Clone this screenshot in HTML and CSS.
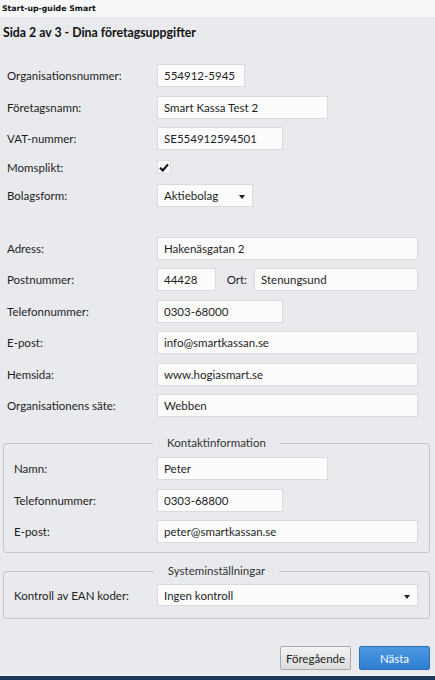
FILE: index.html
```html
<!DOCTYPE html>
<html lang="sv">
<head>
<meta charset="utf-8">
<title>Start-up-guide Smart</title>
<link rel="stylesheet" href="styles.css">
</head>
<body>
<div class="window">
  <div class="titlebar">Start-up-guide Smart</div>
  <div class="content">
    <h1 class="heading">Sida 2 av 3 - Dina företagsuppgifter</h1>

    <div class="group first">
      <div class="row"><span class="label">Organisationsnummer:</span><span class="input w88">554912-5945</span></div>
      <div class="row"><span class="label">Företagsnamn:</span><span class="input w171">Smart Kassa Test 2</span></div>
      <div class="row"><span class="label">VAT-nummer:</span><span class="input w126">SE554912594501</span></div>
      <div class="row check-row"><span class="label">Momsplikt:</span><span class="checkbox"><svg width="10" height="9" viewBox="0 0 10 9"><path d="M1 4.8 L3.8 7.4 L9 1.4" fill="none" stroke="#111" stroke-width="2.2"/></svg></span></div>
      <div class="row"><span class="label">Bolagsform:</span><span class="input select w96">Aktiebolag<span class="arrow"></span></span></div>
    </div>

    <div class="group second">
      <div class="row"><span class="label">Adress:</span><span class="input wfull">Hakenäsgatan 2</span></div>
      <div class="row"><span class="label">Postnummer:</span><span class="input w59">44428</span><span class="ort-label">Ort:</span><span class="input wort">Stenungsund</span></div>
      <div class="row"><span class="label">Telefonnummer:</span><span class="input w126">0303-68000</span></div>
      <div class="row"><span class="label">E-post:</span><span class="input wfull">info@smartkassan.se</span></div>
      <div class="row"><span class="label">Hemsida:</span><span class="input wfull">www.hogiasmart.se</span></div>
      <div class="row"><span class="label">Organisationens säte:</span><span class="input wfull">Webben</span></div>
    </div>

    <fieldset class="box contact">
      <legend>Kontaktinformation</legend>
      <div class="row"><span class="label inner">Namn:</span><span class="input w171">Peter</span></div>
      <div class="row"><span class="label inner">Telefonnummer:</span><span class="input w126">0303-68800</span></div>
      <div class="row"><span class="label inner">E-post:</span><span class="input wfull">peter@smartkassan.se</span></div>
    </fieldset>

    <fieldset class="box system">
      <legend>Systeminställningar</legend>
      <div class="row sel-row"><span class="label inner">Kontroll av EAN koder:</span><span class="input select wfull">Ingen kontroll<span class="arrow"></span></span></div>
    </fieldset>

    <div class="buttons">
      <button class="btn prev">Föregående</button>
      <button class="btn next">Nästa</button>
    </div>
  </div>
  <div class="taskbar"></div>
</div>
</body>
</html>
```
FILE: styles.css
```css
* { box-sizing: border-box; }
html, body { margin: 0; padding: 0; }
body {
  width: 435px;
  height: 680px;
  overflow: hidden;
  background: #e8eaed;
  font-family: Lato, "Open Sans", sans-serif;
  font-size: 11.5px;
  color: #1e1e1e;
}
.window {
  display: flex;
  flex-direction: column;
  height: 680px;
}
.titlebar {
  height: 17px;
  background: #f6f7f9;
  font-family: "DejaVu Sans", sans-serif;
  font-weight: bold;
  font-size: 7.8px;
  color: #111;
  padding: 4px 0 0 2px;
  line-height: 9px;
}
.content {
  flex: 1;
  display: flex;
  flex-direction: column;
  padding: 0 5px 0 3px;
  border-bottom: 1px solid #f4f5f7;
}
.heading {
  margin: 8px 0 0 0;
  font-size: 12.3px;
  font-weight: bold;
  color: #111;
  line-height: 16px;
}
.group { display: flex; flex-direction: column; gap: 8.5px; }
.group.first { margin-top: 23px; }
.group.second { margin-top: 30px; }
.row {
  display: flex;
  align-items: center;
  height: 23px;
}
.check-row { height: 17px; margin-bottom: -0.5px; }
.label {
  width: 154px;
  padding-left: 4px;
  flex: none;
}
.label.inner { width: 153px; padding-left: 10px; }
.input {
  flex: none;
  height: 23px;
  background: #fcfcfc;
  border: 1px solid #d8dadd;
  padding: 0 6px;
  display: flex;
  align-items: center;
  position: relative;
  color: #1e1e1e;
  white-space: nowrap;
}
.w88 { width: 88px; }
.w171 { width: 171px; }
.w126 { width: 126px; }
.w96 { width: 96px; }
.w59 { width: 59px; }
.wfull { width: 261px; }
.wort { width: 164px; }
.ort-label { width: 38px; text-align: right; padding-right: 7px; }
.checkbox {
  width: 14px;
  height: 14px;
  border: 1px solid #dcdee1;
  background: #fafafa;
  display: flex;
  align-items: center;
  justify-content: center;
}
.select .arrow {
  position: absolute;
  right: 7px;
  top: 10px;
  width: 0;
  height: 0;
  border-left: 3px solid transparent;
  border-right: 3px solid transparent;
  border-top: 4px solid #222;
}
.box {
  margin: 0;
  border: 1px solid #c3c6cb;
  border-radius: 3px;
  min-width: 0;
}
.box legend {
  margin: 0 auto;
  padding: 0 14px;
  color: #333;
  font-size: 11.5px;
  line-height: 12px;
}
.box .row + .row { margin-top: 8.5px; }
.contact { margin-top: 20px; padding: 8px 0 9px 0; }
.system { margin-top: 12px; padding: 7px 0 12px 0; }
.system .row { height: 22px; }
.system .input { height: 22px; }
.buttons {
  margin-top: auto;
  display: flex;
  justify-content: flex-end;
  gap: 8px;
  padding-bottom: 5px;
}
.btn {
  width: 71px;
  height: 24px;
  font-family: Lato, "Open Sans", sans-serif;
  font-size: 11.5px;
  border-radius: 2px;
  padding: 0;
}
.prev {
  background: linear-gradient(#f3f3f3, #dcdcdc);
  border: 1px solid #a9abae;
  color: #222;
}
.next {
  background: linear-gradient(#4d98e0, #2d7dd2);
  border: 1px solid #2c6eb8;
  color: #fff;
}
.taskbar {
  height: 4px;
  background: #1b3656;
  flex: none;
}
```
